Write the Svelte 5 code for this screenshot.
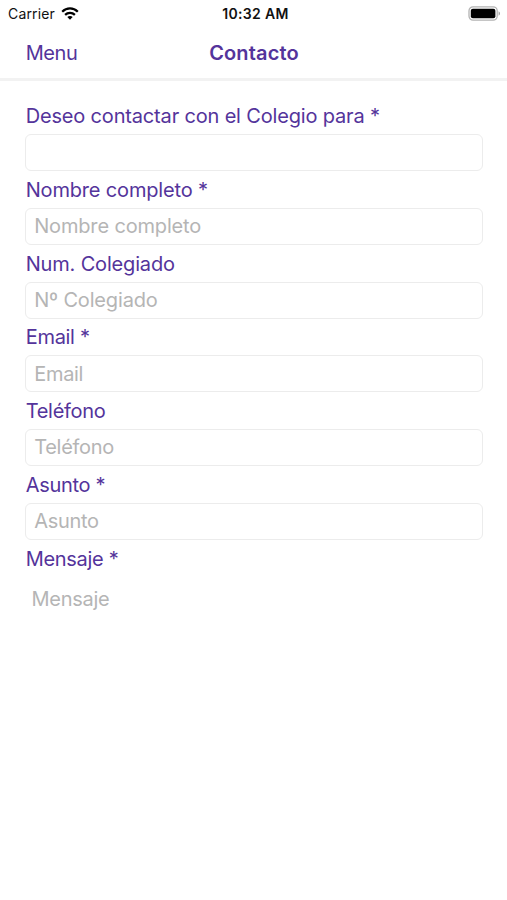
<script>
  const fields = [
    { id: 'motivo', label: 'Deseo contactar con el Colegio para *', placeholder: '' },
    { id: 'nombre', label: 'Nombre completo *', placeholder: 'Nombre completo' },
    { id: 'colegiado', label: 'Num. Colegiado', placeholder: 'Nº Colegiado' },
    { id: 'email', label: 'Email *', placeholder: 'Email' },
    { id: 'telefono', label: 'Teléfono', placeholder: 'Teléfono' },
    { id: 'asunto', label: 'Asunto *', placeholder: 'Asunto' }
  ];
</script>

<div class="screen">
  <div class="status">
    <div class="carrier">
      <span>Carrier</span>
      <svg class="wifi" width="18" height="13" viewBox="0 0 18 13" fill="none" stroke="#000" stroke-width="2.2">
        <path d="M1.2 4.8C5.6 .3 12.4 .3 16.8 4.8" />
        <path d="M4.1 7.9C6.9 5.1 11.1 5.1 13.9 7.9" />
        <path d="M6.3 10C7.8 8.6 10.2 8.6 11.7 10L9 12.8Z" fill="#000" stroke="none" />
      </svg>
    </div>
    <span class="time">10:32 AM</span>
    <svg class="battery" width="33" height="15" viewBox="0 0 33 15">
      <rect x="1" y=".9" width="28.2" height="13.2" rx="4" fill="#fff" stroke="#b3b3b3" stroke-width="1.3" />
      <rect x="2.8" y="2.8" width="24.6" height="9.4" rx="2" fill="#000" />
      <path d="M30.6 5.3C32.4 6 32.4 9 30.6 9.7Z" fill="#999" />
    </svg>
  </div>
  <header>
    <span class="menu">Menu</span>
    <h1>Contacto</h1>
    <span></span>
  </header>
  <form>
    {#each fields as field (field.id)}
      <div class="field">
        <label for={field.id}>{field.label}</label>
        <input id={field.id} placeholder={field.placeholder} />
      </div>
    {/each}
    <div class="field">
      <label for="mensaje">Mensaje *</label>
      <textarea id="mensaje" placeholder="Mensaje"></textarea>
    </div>
  </form>
</div>

<style>
  :global(body) {
    margin: 0;
    background: #fff;
  }
  .screen {
    width: 507px;
    height: 900px;
    overflow: hidden;
    box-sizing: border-box;
    background: #fff;
    color: #54349b;
    font-family: Inter, 'Liberation Sans', sans-serif;
    font-size: 20px;
  }
  .status,
  header {
    display: grid;
    align-items: center;
  }
  .status {
    grid-template-columns: 1fr auto 1fr;
    height: 26px;
    padding: 0 6px 0 8px;
    color: #111;
    font-size: 14px;
  }
  .carrier {
    display: flex;
    align-items: center;
    gap: 6px;
    letter-spacing: 0.15px;
  }
  .time {
    font-weight: 600;
    letter-spacing: 0.35px;
    padding-left: 2px;
  }
  .battery {
    justify-self: end;
  }
  header {
    grid-template-columns: 1fr auto 1fr;
    height: 50px;
    padding: 2px 25px 0;
    border-bottom: 3px solid #f2f2f2;
  }
  .menu {
    padding-left: 0.7px;
    letter-spacing: -0.4px;
  }
  h1 {
    margin: 0;
    padding-left: 1px;
    font-size: 20px;
    font-weight: 600;
    letter-spacing: 0.15px;
  }
  form {
    padding: 22px 24px 0 25px;
  }
  .field {
    height: 73.75px;
    display: flex;
    flex-direction: column;
  }
  label {
    height: 31px;
    line-height: 27.6px;
    padding-left: 0.7px;
    letter-spacing: -0.17px;
    box-sizing: border-box;
    white-space: nowrap;
    flex: none;
  }
  .field:nth-child(n + 4) label {
    letter-spacing: -0.3px;
  }
  input,
  textarea {
    box-sizing: border-box;
    width: 100%;
    margin: 0;
    outline: none;
    resize: none;
    background: #fff;
    font: inherit;
    letter-spacing: -0.16px;
    color: #333;
  }
  .field:nth-child(n + 4) input,
  textarea {
    letter-spacing: -0.3px;
  }
  input {
    height: 37px;
    padding: 0 8px 0.5px 8.2px;
    border: 1px solid #ececec;
    border-radius: 6px;
  }
  textarea {
    height: 240px;
    flex: none;
    padding: 10.5px 6.6px;
    border: 0;
    line-height: 24px;
  }
  ::placeholder {
    color: #b5b5b5;
    opacity: 1;
  }
</style>
